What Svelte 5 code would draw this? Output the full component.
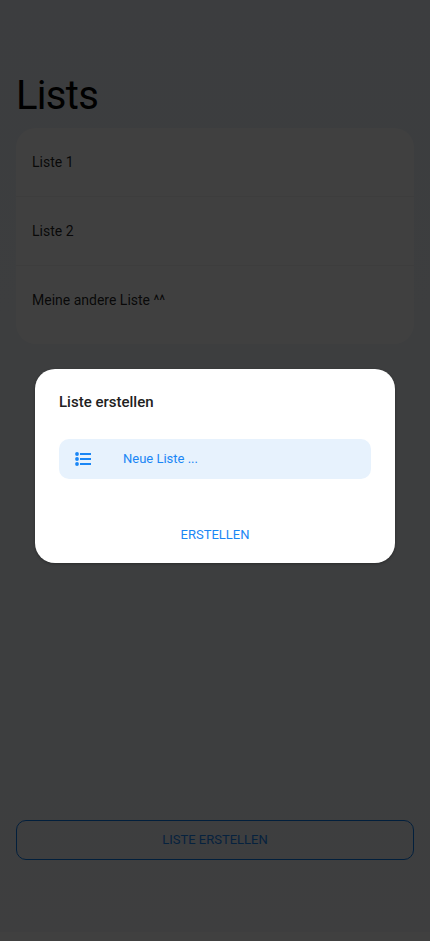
<script>
  const lists = ['Liste 1', 'Liste 2', 'Meine andere Liste ^^'];
</script>

<div class="page">
  <h1>Lists</h1>
  <ul>
    {#each lists as name}
      <li>{name}</li>
    {/each}
  </ul>
  <button class="outline">LISTE ERSTELLEN</button>
  <footer></footer>
</div>

<div class="overlay">
  <section class="dialog">
    <h2>Liste erstellen</h2>
    <div class="field">
      <svg width="24" height="24" viewBox="0 0 24 24" fill="currentColor">
        <path d="M9 6h11v2H9zM9 11h11v2H9zM9 16h11v2H9z" />
        <circle cx="6" cy="7" r="1.9" />
        <circle cx="6" cy="12" r="1.9" />
        <circle cx="6" cy="17" r="1.9" />
      </svg>
      <span>Neue Liste ...</span>
    </div>
    <button class="text">ERSTELLEN</button>
  </section>
</div>

<style>
  :global(body) {
    margin: 0;
  }
  .page,
  .overlay {
    font-family: Roboto, sans-serif;
    box-sizing: border-box;
  }
  .page {
    height: 941px;
    display: flex;
    flex-direction: column;
    background: linear-gradient(#eff4f9, #f5f7fb);
    padding-top: 72px;
  }
  h1 {
    margin: 0 16px 8px;
    font-size: 40px;
    line-height: 48px;
    font-weight: 400;
    letter-spacing: -0.7px;
    color: #000;
  }
  ul {
    margin: 0 16px;
    padding: 0 0 10px;
    height: 216px;
    box-sizing: border-box;
    list-style: none;
    background: #fff;
    border-radius: 20px;
  }
  li {
    height: 69px;
    box-sizing: border-box;
    padding: 0 16px;
    font-size: 14px;
    line-height: 68px;
    color: rgba(0, 0, 0, 0.87);
    border-bottom: 1px solid #f2f2f2;
  }
  li:last-child {
    border-bottom: 0;
  }
  button {
    font-family: inherit;
    font-size: 13px;
    font-weight: 400;
    color: #1a86f5;
    background: none;
    padding: 0 0 2px;
  }
  .outline {
    margin: auto 16px 72px;
    height: 40px;
    flex: none;
    border: 1px solid #0a7cf0;
    border-radius: 10px;
  }
  footer {
    height: 9px;
    flex: none;
    background: #fff;
  }
  .overlay {
    position: absolute;
    inset: 0 0 auto;
    height: 941px;
    padding: 369px 35px 0;
    background: rgba(0, 0, 0, 0.75);
  }
  .dialog {
    height: 194px;
    box-sizing: border-box;
    padding: 22px 24px 0;
    background: #fff;
    border-radius: 20px;
    display: flex;
    flex-direction: column;
    box-shadow: 0 1px 3px rgba(0, 0, 0, 0.3);
  }
  h2 {
    margin: 0 0 26px;
    font-size: 15px;
    line-height: 22px;
    font-weight: 500;
    color: #212121;
  }
  .field {
    height: 40px;
    display: flex;
    align-items: center;
    gap: 28px;
    padding-left: 12px;
    background: #e7f2fd;
    border-radius: 10px;
    color: #1a86f5;
    font-size: 13px;
    box-sizing: border-box;
  }
  .field span {
    padding-bottom: 2px;
  }
  .text {
    align-self: center;
    margin-top: 36px;
    height: 40px;
    border: 0;
  }
</style>
